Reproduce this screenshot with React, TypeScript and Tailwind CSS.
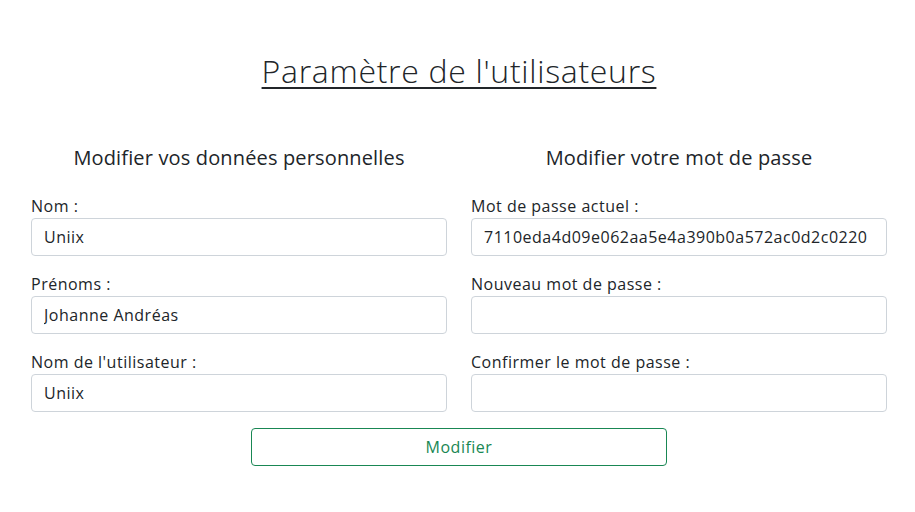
import React from "react";

const font = { fontFamily: '"Open Sans", "Liberation Sans", sans-serif' };

function Field({ label, value }: { label: string; value?: string }) {
  return (
    <div className="mb-4">
      <label className="block text-[16px] leading-6 tracking-[0.5px] text-[#212529]">{label}</label>
      <input
        readOnly
        value={value ?? ""}
        className="block w-full h-[38px] px-3 text-[16px] tracking-[0.5px] text-[#212529] bg-white border border-[#ced4da] rounded-[4px] outline-none"
      />
    </div>
  );
}

export default function App() {
  return (
    <div className="min-h-[512px] bg-white text-[#212529] pl-[31px] pr-[28px]" style={font}>
      <div className="pt-[52px] text-center">
        <h1 className="inline-block text-[32px] leading-[38px] font-light tracking-[0.7px] underline underline-offset-[4px] decoration-[2px]">
          Paramètre de l'utilisateurs
        </h1>
      </div>
      <div className="mt-[56px] grid grid-cols-2 gap-x-6">
        <div>
          <h2 className="text-center text-[20px] leading-6 tracking-[0.15px] mb-6">Modifier vos données personnelles</h2>
          <Field label="Nom :" value="Uniix" />
          <Field label="Prénoms :" value="Johanne Andréas" />
          <Field label="Nom de l'utilisateur :" value="Uniix" />
        </div>
        <div>
          <h2 className="text-center text-[20px] leading-6 tracking-[0.15px] mb-6">Modifier votre mot de passe</h2>
          <Field label="Mot de passe actuel :" value="7110eda4d09e062aa5e4a390b0a572ac0d2c0220" />
          <Field label="Nouveau mot de passe :" />
          <Field label="Confirmer le mot de passe :" />
        </div>
      </div>
      <div className="flex justify-center">
        <button className="w-[416px] h-[38px] border border-[#198754] rounded-[4px] text-[16px] tracking-[0.5px] text-[#198754] bg-white">
          Modifier
        </button>
      </div>
    </div>
  );
}
